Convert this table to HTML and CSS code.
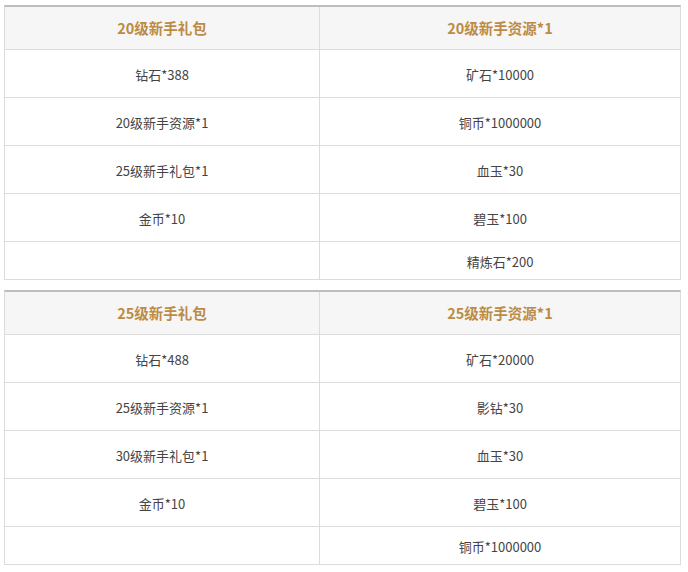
FILE: index.html
```html
<!DOCTYPE html>
<html lang="zh">
<head>
<meta charset="utf-8">
<link rel="stylesheet" href="styles.css">
</head>
<body>
<div class="page">
  <div class="tbl">
    <div class="row head"><div class="cell">20级新手礼包</div><div class="cell">20级新手资源*1</div></div>
    <div class="row"><div class="cell">钻石*388</div><div class="cell">矿石*10000</div></div>
    <div class="row"><div class="cell">20级新手资源*1</div><div class="cell">铜币*1000000</div></div>
    <div class="row"><div class="cell">25级新手礼包*1</div><div class="cell">血玉*30</div></div>
    <div class="row"><div class="cell">金币*10</div><div class="cell">碧玉*100</div></div>
    <div class="row last"><div class="cell"></div><div class="cell">精炼石*200</div></div>
  </div>
  <div class="tbl">
    <div class="row head"><div class="cell">25级新手礼包</div><div class="cell">25级新手资源*1</div></div>
    <div class="row"><div class="cell">钻石*488</div><div class="cell">矿石*20000</div></div>
    <div class="row"><div class="cell">25级新手资源*1</div><div class="cell">影钻*30</div></div>
    <div class="row"><div class="cell">30级新手礼包*1</div><div class="cell">血玉*30</div></div>
    <div class="row"><div class="cell">金币*10</div><div class="cell">碧玉*100</div></div>
    <div class="row last"><div class="cell"></div><div class="cell">铜币*1000000</div></div>
  </div>
</div>
</body>
</html>
```
FILE: styles.css
```css
* { box-sizing: border-box; }
html, body { margin: 0; padding: 0; background: #fff; }
body {
  font-family: "Noto Sans CJK SC", "Noto Sans", sans-serif;
  font-size: 13px;
  color: #444;
}
.page {
  padding: 5px 0 0 4px;
  display: flex;
  flex-direction: column;
  gap: 10px;
}
.tbl {
  width: 677px;
  border: 1px solid #dcdcdc;
  border-top: 2px solid #bdbdbd;
}
.row {
  display: grid;
  grid-template-columns: 315px 360px;
  height: 48px;
  border-bottom: 1px solid #dcdcdc;
}
.row .cell {
  padding-top: 2px;
}
.row.head {
  height: 43px;
  background: #f6f6f6;
  color: #bc8b45;
  font-weight: bold;
  font-size: 14.5px;
}
.row.head .cell {
  padding-top: 0;
}
.row.last {
  height: 37px;
  border-bottom: none;
}
.cell {
  display: flex;
  align-items: center;
  justify-content: center;
  line-height: 1;
}
.cell:first-child {
  border-right: 1px solid #dcdcdc;
}
```
